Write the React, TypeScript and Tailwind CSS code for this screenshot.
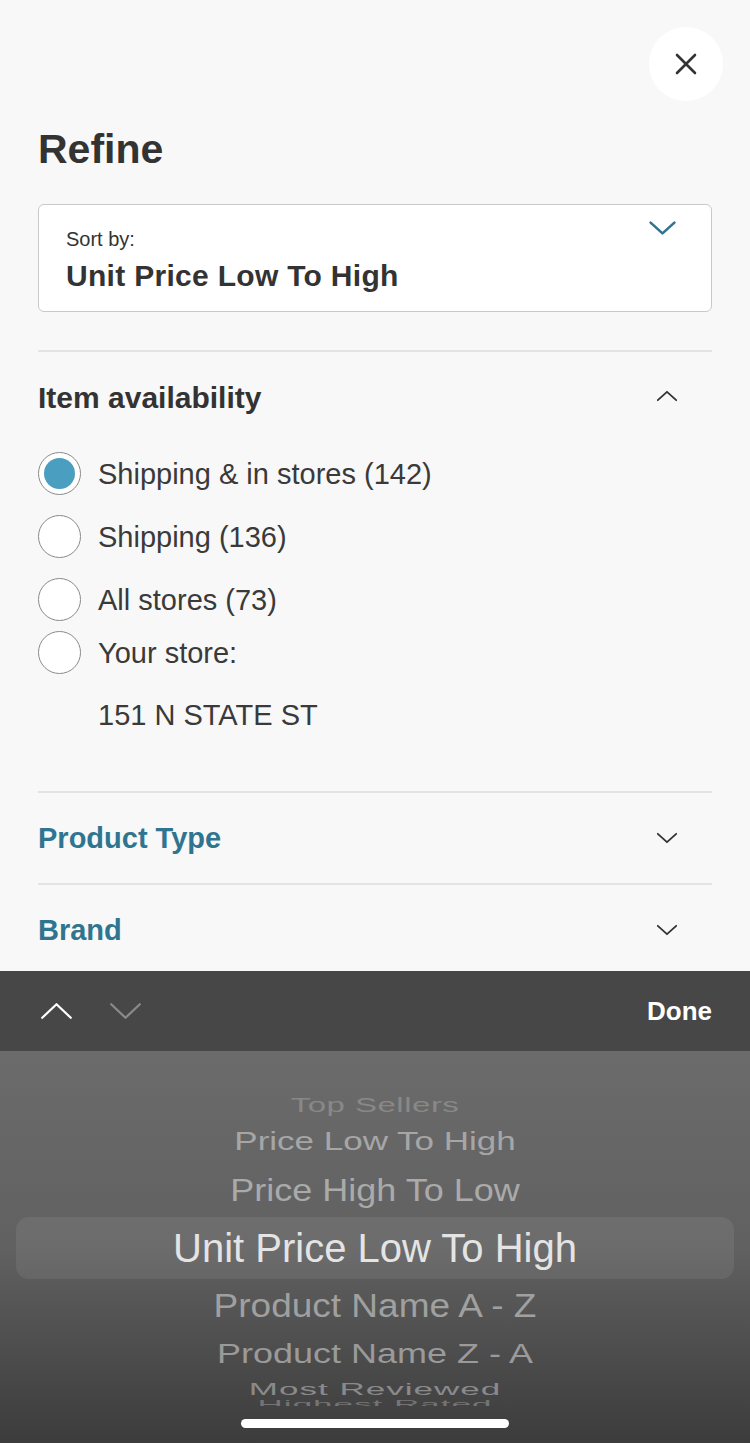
import React from "react";

const font = { fontFamily: '"Liberation Sans", Arial, Helvetica, sans-serif' };

function ChevronDown({ w = 22, h = 12, color = "#333", sw = 1.8 }: { w?: number; h?: number; color?: string; sw?: number }) {
  return (
    <svg width={w} height={h} viewBox={`0 0 ${w} ${h}`} fill="none">
      <polyline points={`${sw},${sw} ${w / 2},${h - sw} ${w - sw},${sw}`} stroke={color} strokeWidth={sw} strokeLinecap="round" strokeLinejoin="round" />
    </svg>
  );
}

function ChevronUp({ w = 22, h = 12, color = "#333", sw = 1.8 }: { w?: number; h?: number; color?: string; sw?: number }) {
  return (
    <svg width={w} height={h} viewBox={`0 0 ${w} ${h}`} fill="none">
      <polyline points={`${sw},${h - sw} ${w / 2},${sw} ${w - sw},${h - sw}`} stroke={color} strokeWidth={sw} strokeLinecap="round" strokeLinejoin="round" />
    </svg>
  );
}

function Radio({ checked }: { checked?: boolean }) {
  return (
    <div className="w-[43px] h-[43px] rounded-full border-[1.5px] border-[#8a8a8a] bg-white flex items-center justify-center shrink-0">
      {checked && <div className="w-[31px] h-[31px] rounded-full bg-[#4a9fc0]" />}
    </div>
  );
}

export default function App() {
  return (
    <div className="w-[750px] h-[1443px] flex flex-col bg-[#f8f8f8] overflow-hidden text-[#333]" style={font}>
      {/* Content */}
      <div className="h-[971px] shrink-0 overflow-hidden flex flex-col">
        <div className="flex justify-end pr-[27px] pt-[27px] shrink-0">
          <div className="w-[74px] h-[74px] rounded-full bg-white flex items-center justify-center">
            <svg width="22" height="22" viewBox="0 0 22 22" fill="none">
              <line x1="2" y1="2" x2="20" y2="20" stroke="#333" strokeWidth="2.6" strokeLinecap="round" />
              <line x1="20" y1="2" x2="2" y2="20" stroke="#333" strokeWidth="2.6" strokeLinecap="round" />
            </svg>
          </div>
        </div>
        <div className="px-[38px] flex flex-col shrink-0">
          <h1 className="mt-[24px] text-[41px] leading-[48px] font-bold text-[#333]">Refine</h1>

          <div className="mt-[31px] h-[108px] shrink-0 rounded-[6px] border-[1.5px] border-[#c9c9c9] bg-white flex justify-between pl-[27px] pr-[34px]">
            <div className="flex flex-col pt-[22px]">
              <div className="text-[20px] leading-[24px] text-[#333]">Sort by:</div>
              <div className="mt-[7px] text-[30px] leading-[36px] font-bold text-[#333] tracking-[0.3px]">Unit Price Low To High</div>
            </div>
            <div className="pt-[15px]">
              <ChevronDown w={29} h={16} color="#2f7590" sw={2.6} />
            </div>
          </div>

          <div className="mt-[38px] h-[2px] shrink-0 bg-[#e3e3e3]" />

          <div className="mt-[28px] flex items-center justify-between h-[36px] shrink-0">
            <div className="text-[30px] leading-[36px] font-bold text-[#333]">Item availability</div>
            <div className="mr-[34px] -mt-[4px]">
              <ChevronUp w={22} h={12} color="#333" sw={1.8} />
            </div>
          </div>

          <div className="mt-[36px] flex flex-col shrink-0">
            <div className="flex items-center h-[43px]">
              <Radio checked />
              <span className="ml-[17px] text-[29px] leading-[36px] text-[#3a3a3a]">Shipping &amp; in stores (142)</span>
            </div>
            <div className="mt-[20px] flex items-center h-[43px]">
              <Radio />
              <span className="ml-[17px] text-[29px] leading-[36px] text-[#3a3a3a]">Shipping (136)</span>
            </div>
            <div className="mt-[20px] flex items-center h-[43px]">
              <Radio />
              <span className="ml-[17px] text-[29px] leading-[36px] text-[#3a3a3a]">All stores (73)</span>
            </div>
            <div className="mt-[10px] flex items-center h-[43px]">
              <Radio />
              <span className="ml-[17px] text-[29px] leading-[36px] text-[#3a3a3a]">Your store:</span>
            </div>
            <div className="mt-[19px] h-[43px] flex items-center pl-[60px]">
              <span className="text-[29px] leading-[36px] text-[#3a3a3a]">151 N STATE ST</span>
            </div>
          </div>

          <div className="mt-[55px] shrink-0 border-t-2 border-[#e3e3e3] h-[92px] flex items-center justify-between">
            <span className="text-[29px] leading-[36px] font-bold text-[#2f7590]">Product Type</span>
            <div className="mr-[34px]">
              <ChevronDown w={22} h={12} color="#333" sw={1.8} />
            </div>
          </div>
          <div className="shrink-0 border-t-2 border-[#e3e3e3] h-[92px] flex items-center justify-between">
            <span className="text-[29px] leading-[36px] font-bold text-[#2f7590]">Brand</span>
            <div className="mr-[34px]">
              <ChevronDown w={22} h={12} color="#333" sw={1.8} />
            </div>
          </div>
        </div>
      </div>

      {/* Keyboard toolbar */}
      <div className="h-[80px] shrink-0 bg-[#474747] flex items-center justify-between pl-[40px] pr-[38px]">
        <div className="flex items-center gap-[36px]">
          <ChevronUp w={33} h={18} color="#ffffff" sw={2.2} />
          <ChevronDown w={33} h={18} color="#8a8a8a" sw={2.2} />
        </div>
        <span className="text-[26px] leading-[32px] font-bold text-white">Done</span>
      </div>

      {/* Picker */}
      <div className="flex-1 bg-linear-to-b from-[#6b6b6b] via-[#616161] via-50% to-[#3c3c3c] flex flex-col pt-[39px]">
        <div className="h-[316px] shrink-0 overflow-hidden flex flex-col">
          <div className="-mt-[4px] h-[40px] shrink-0 flex items-center justify-center">
            <span className="text-[33px] leading-[40px] text-[#888888] whitespace-nowrap scale-y-[0.59] tracking-[0.5px]">Top Sellers</span>
          </div>
          <div className="-mt-[5px] h-[40px] shrink-0 flex items-center justify-center">
            <span className="text-[35px] leading-[40px] text-[#a6a6a6] whitespace-nowrap scale-y-[0.72]">Price Low To High</span>
          </div>
          <div className="mt-[10px] h-[40px] shrink-0 flex items-center justify-center">
            <span className="text-[36px] leading-[40px] text-[#aaaaaa] whitespace-nowrap scale-y-[0.86]">Price High To Low</span>
          </div>
          <div className="mt-[6px] mx-[16px] h-[62px] shrink-0 rounded-[13px] bg-white/[0.07] flex items-center justify-center">
            <span className="text-[40px] leading-[44px] text-[#e4e4e4] whitespace-nowrap">Unit Price Low To High</span>
          </div>
          <div className="mt-[7px] h-[40px] shrink-0 flex items-center justify-center">
            <span className="text-[37px] leading-[40px] text-[#a0a0a0] whitespace-nowrap scale-y-[0.91]">Product Name A - Z</span>
          </div>
          <div className="mt-[8px] h-[40px] shrink-0 flex items-center justify-center">
            <span className="text-[36px] leading-[40px] text-[#9a9a9a] whitespace-nowrap scale-y-[0.78]">Product Name Z - A</span>
          </div>
          <div className="-mt-[5px] h-[40px] shrink-0 flex items-center justify-center">
            <span className="text-[35px] leading-[40px] text-[#8a8a8a] whitespace-nowrap scale-y-[0.48] tracking-[1px]">Most Reviewed</span>
          </div>
          <div className="-mt-[25px] h-[40px] shrink-0 flex items-center justify-center">
            <span className="text-[35px] leading-[40px] text-[#747474] whitespace-nowrap scale-y-[0.3] tracking-[1px]">Highest Rated</span>
          </div>
        </div>
        <div className="mt-[13px] flex justify-center">
          <div className="w-[268px] h-[9px] rounded-full bg-white" />
        </div>
      </div>
    </div>
  );
}
